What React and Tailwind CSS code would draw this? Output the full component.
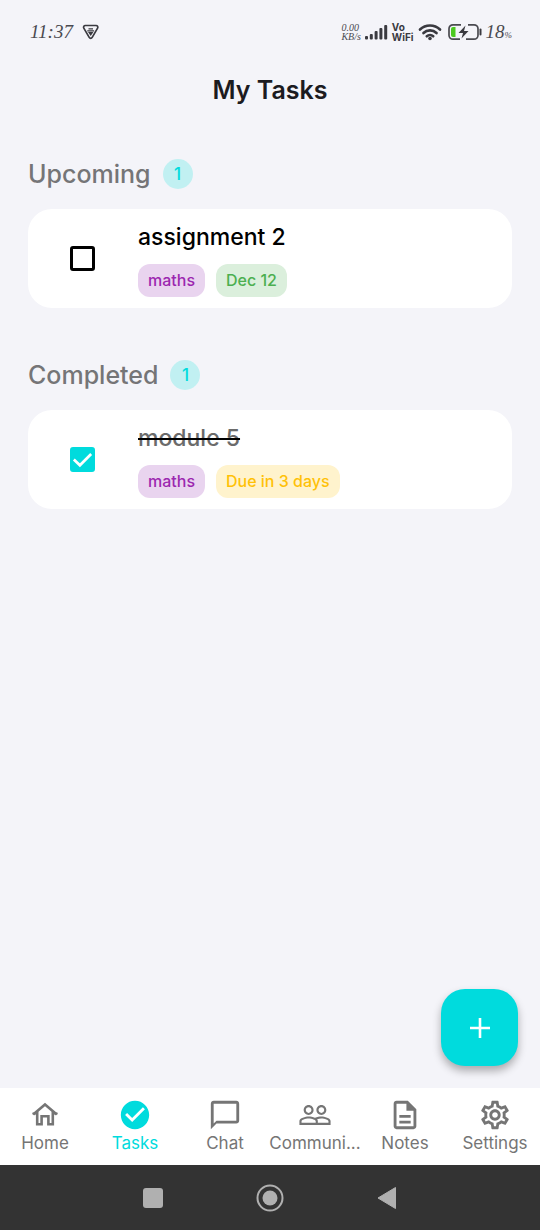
import { useState } from 'react'
import clsx from 'clsx'
import {
  MdChatBubbleOutline,
  MdCheckCircle,
  MdOutlineDescription,
  MdOutlineSettings,
  MdPeopleOutline,
} from 'react-icons/md'

const initialTasks = [
  { id: 1, title: 'assignment 2', subject: 'maths', due: 'Dec 12', tone: 'green', done: false },
  { id: 2, title: 'module 5', subject: 'maths', due: 'Due in 3 days', tone: 'amber', done: true },
]

const tabs = [
  { label: 'Home', Icon: HomeIcon },
  { label: 'Tasks', Icon: MdCheckCircle },
  { label: 'Chat', Icon: MdChatBubbleOutline },
  { label: 'Communi...', Icon: MdPeopleOutline },
  { label: 'Notes', Icon: MdOutlineDescription },
  { label: 'Settings', Icon: MdOutlineSettings },
]

const tones = {
  purple: 'bg-[#e9d4ef] text-[#9c27b0]',
  green: 'bg-[#dbefdc] text-[#4caf50]',
  amber: 'bg-[#fff3cd] text-[#ffc107]',
}

function HomeIcon({ className }) {
  return (
    <svg className={className} viewBox="0 0 34 34" fill="none" stroke="currentColor" strokeWidth="2.6">
      <path d="M5.200 16.400 17 6.400l11.800 10" />
      <path d="M9.200 13.500v12.700h4.400v-8h6.800v8h4.400V13.500" />
      <path d="M4.500 15.600h4.700M24.800 15.600h4.700" strokeWidth="2" />
    </svg>
  )
}

function StatusBar() {
  return (
    <div className="flex h-16 items-center justify-between pl-[30px] pr-7 font-['Liberation_Serif',serif] italic text-[#4a4a50]">
      <div className="flex items-center gap-2">
        <span className="text-[19px]">11:37</span>
        <svg className="size-5" viewBox="0 0 20 20" fill="none" stroke="#3a3a40" strokeWidth="1.7" strokeLinejoin="round">
          <path d="M4.300 3.500h10.800c1.400 0 2.200 1.400 1.500 2.600l-5.400 9.300c-.7 1.200-2.300 1.200-3 0L2.800 6.100c-.7-1.200.1-2.600 1.500-2.600Z" />
          <path d="M7.500 6.800h4.500M6.300 8.800h6.800" strokeWidth="1.300" />
          <path d="M7 10h5.400l-2.700 4z" fill="#3a3a40" stroke="none" />
        </svg>
      </div>
      <div className="flex items-center gap-1">
        <div className="text-[10px] leading-[9px]">
          <div>0.00</div>
          <div>KB/s</div>
        </div>
        <svg className="h-4 w-[23px]" viewBox="0 0 23 16" fill="#3a3a40">
          <rect x="0" y="12" width="3" height="3.500" rx="1" />
          <rect x="4.800" y="10" width="3" height="5.500" rx="1" />
          <rect x="9.600" y="7" width="3" height="8.500" rx="1" />
          <rect x="14.400" y="4" width="3" height="11.500" rx="1" />
          <rect x="19.200" y="1" width="3" height="14.500" rx="1" />
        </svg>
        <div className="font-['Inter',sans-serif] text-[10px] leading-[10px] font-bold not-italic text-[#3a3a40]">
          <div>Vo</div>
          <div>WiFi</div>
        </div>
        <svg className="h-[18px] w-6" viewBox="0 0 24 18" fill="none" stroke="#3a3a40" strokeWidth="2.700" strokeLinecap="round">
          <path d="M2 6.500a14.500 14.500 0 0 1 20 0M5.500 10a9.500 9.500 0 0 1 13 0M8.800 13.200a4.800 4.800 0 0 1 6.400 0" />
          <circle cx="12" cy="15.500" r="1.800" fill="#3a3a40" stroke="none" />
        </svg>
        <div className="flex items-center gap-1">
          <svg className="ml-0.5 h-[18px] w-[34px]" viewBox="0 0 34 18" fill="none">
            <path d="M13 1.800H5A4 4 0 0 0 1 5.800v6.400a4 4 0 0 0 4 4h7M20 1.800h6a4 4 0 0 1 4 4v6.400a4 4 0 0 1-4 4h-8" stroke="#4a4a50" strokeWidth="1.700" />
            <path d="M7.500 4H5a2 2 0 0 0-2 2v6a2 2 0 0 0 2 2h2.500z" fill="#4bc91f" />
            <path d="m17.500 2.500-7 7.500h4.500l-1.500 5.500 7-7.500H16z" fill="#3a3a40" />
            <path d="M32.500 6.500v5" stroke="#3a3a40" strokeWidth="2" strokeLinecap="round" />
          </svg>
          <span className="text-[19px]">
            18<span className="text-[9px]">%</span>
          </span>
        </div>
      </div>
    </div>
  )
}

function Chip({ tone, children }) {
  return (
    <span className={clsx('rounded-xl px-2.5 py-1.5 text-base leading-[21px] font-medium', tones[tone])}>
      {children}
    </span>
  )
}

function TaskCard({ task, onToggle }) {
  const id = `task-${task.id}`
  return (
    <li className="flex h-[99px] items-center rounded-3xl bg-white pl-[42px]">
      <span className="grid size-[25px] shrink-0">
        <input
          id={id}
          type="checkbox"
          checked={task.done}
          onChange={onToggle}
          className="peer col-start-1 row-start-1 size-[25px] appearance-none rounded-[3px] border-3 border-black checked:border-[#00dbdd] checked:bg-[#00dbdd]"
        />
        <svg
          className="pointer-events-none col-start-1 row-start-1 hidden size-[25px] peer-checked:block"
          viewBox="0 0 26 26"
          fill="none"
          stroke="white"
          strokeWidth="2.800"
        >
          <path d="m4 13 6.300 6L22 7.300" />
        </svg>
      </span>
      <div className="ml-[43px] min-w-0 pt-0.5">
        <label
          htmlFor={id}
          className={clsx(
            'block text-[23px] leading-[30px] font-medium',
            task.done ? 'text-[#6b6b6b] line-through decoration-black decoration-2' : 'text-black'
          )}
        >
          {task.title}
        </label>
        <div className="mt-3 flex gap-[11px]">
          <Chip tone="purple">{task.subject}</Chip>
          <Chip tone={task.tone}>{task.due}</Chip>
        </div>
      </div>
    </li>
  )
}

function Section({ title, tasks, onToggle }) {
  return (
    <section>
      <div className="flex items-center gap-3">
        <h2 className="text-[25px] leading-[34px] font-medium text-[#757577]">{title}</h2>
        <span className="flex size-[30px] items-center justify-center rounded-full bg-[#c1f0f2] text-[17px] leading-5 font-medium text-[#00dbdd]">
          {tasks.length}
        </span>
      </div>
      <ul className="mt-[18px] space-y-3">
        {tasks.map((task) => (
          <TaskCard key={task.id} task={task} onToggle={() => onToggle(task.id)} />
        ))}
      </ul>
    </section>
  )
}

export default function App() {
  const [tasks, setTasks] = useState(initialTasks)
  const [active, setActive] = useState('Tasks')

  const toggle = (id) =>
    setTasks((prev) => prev.map((t) => (t.id === id ? { ...t, done: !t.done } : t)))

  return (
    <div className="flex min-h-screen flex-col bg-[#f4f4f9] font-['Inter',sans-serif]">
      <StatusBar />
      <header className="py-2.5 text-center">
        <h1 className="text-[25px] leading-8 font-semibold text-[#1c1b1f]">My Tasks</h1>
      </header>

      <main className="relative flex-1 space-y-[50px] px-7 pt-[41px]">
        <Section title="Upcoming" tasks={tasks.filter((t) => !t.done)} onToggle={toggle} />
        <Section title="Completed" tasks={tasks.filter((t) => t.done)} onToggle={toggle} />
        <button
          type="button"
          aria-label="Add task"
          className="absolute right-[22px] bottom-[22px] flex size-[77px] items-center justify-center rounded-3xl bg-[#00dbdd] shadow-[0_5px_9px_rgba(0,0,0,0.3)]"
        >
          <svg className="size-5" viewBox="0 0 20 20" stroke="white" strokeWidth="2.600">
            <path d="M10 0v20M0 10h20" />
          </svg>
        </button>
      </main>

      <nav className="grid h-[77px] grid-cols-6 bg-white">
        {tabs.map(({ label, Icon }) => (
          <button
            key={label}
            type="button"
            onClick={() => setActive(label)}
            className={clsx(
              'flex min-w-0 flex-col items-center pt-2.5',
              active === label ? 'text-[#00dbdd]' : 'text-[#757575]'
            )}
          >
            <Icon className="size-[34px] shrink-0" />
            <span className="text-[17px] leading-[22px] whitespace-nowrap">{label}</span>
          </button>
        ))}
      </nav>

      <div className="flex h-[65px] items-center justify-center gap-[91px] bg-[#333333]">
        <button type="button" aria-label="Recent apps">
          <svg className="size-6" viewBox="0 0 24 24" fill="#b0b0b0">
            <rect x="2" y="2" width="20" height="20" rx="3" />
          </svg>
        </button>
        <button type="button" aria-label="Home screen">
          <svg className="size-7" viewBox="0 0 28 28" fill="#b0b0b0">
            <circle cx="14" cy="14" r="12.500" fill="none" stroke="#b0b0b0" strokeWidth="2" />
            <circle cx="14" cy="14" r="7.500" />
          </svg>
        </button>
        <button type="button" aria-label="Back">
          <svg className="size-6" viewBox="0 0 24 24" fill="#b0b0b0" stroke="#b0b0b0" strokeLinejoin="round">
            <path d="M20.500 1.500v21L3 12z" />
          </svg>
        </button>
      </div>
    </div>
  )
}
